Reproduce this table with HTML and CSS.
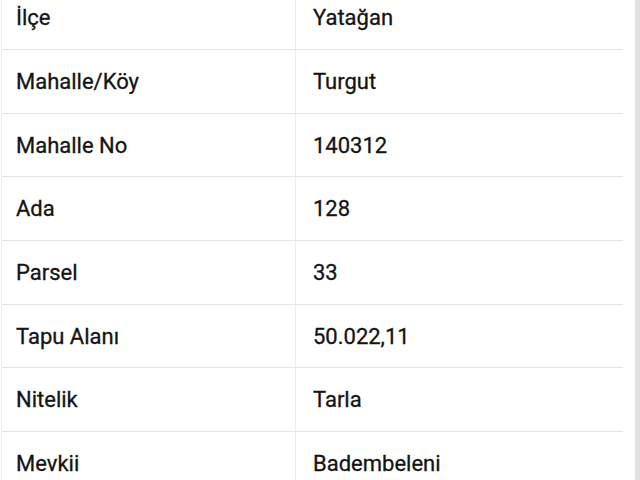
FILE: index.html
```html
<!DOCTYPE html>
<html lang="tr">
<head>
<meta charset="utf-8">
<link rel="stylesheet" href="styles.css">
</head>
<body>
<div class="page">
  <div class="table">
    <div class="row"><div class="label">İlçe</div><div class="value">Yatağan</div></div>
    <div class="row"><div class="label">Mahalle/Köy</div><div class="value">Turgut</div></div>
    <div class="row"><div class="label">Mahalle No</div><div class="value">140312</div></div>
    <div class="row"><div class="label">Ada</div><div class="value">128</div></div>
    <div class="row"><div class="label">Parsel</div><div class="value">33</div></div>
    <div class="row"><div class="label">Tapu Alanı</div><div class="value">50.022,11</div></div>
    <div class="row"><div class="label">Nitelik</div><div class="value">Tarla</div></div>
    <div class="row"><div class="label">Mevkii</div><div class="value">Badembeleni</div></div>
  </div>
  <div class="gap"></div>
  <div class="scroll"></div>
</div>
</body>
</html>
```
FILE: styles.css
```css
html, body {
  margin: 0;
  padding: 0;
  background: #ffffff;
}
body {
  width: 640px;
  height: 480px;
  overflow: hidden;
  font-family: Roboto, "Noto Sans", sans-serif;
  font-size: 22px;
  color: #141414;
  -webkit-text-stroke: 0.3px #141414;
}
.page {
  display: flex;
  height: 480px;
}
.table {
  width: 621px;
  margin-left: 1px;
  border-left: 1px solid #efefef;
  display: flex;
  flex-direction: column;
  margin-top: -13.7px;
}
.row {
  display: grid;
  grid-template-columns: 294px 1fr;
  height: 63.7px;
  flex: 0 0 63.7px;
  box-sizing: border-box;
  border-bottom: 1.5px solid #e3e3e3;
}
.label {
  display: flex;
  align-items: center;
  padding-left: 14px;
  border-right: 1px solid #ececec;
}
.value {
  display: flex;
  align-items: center;
  padding-left: 17px;
}
.gap {
  flex: 1;
}
.scroll {
  width: 5px;
  background: #e1e1e1;
}
```
